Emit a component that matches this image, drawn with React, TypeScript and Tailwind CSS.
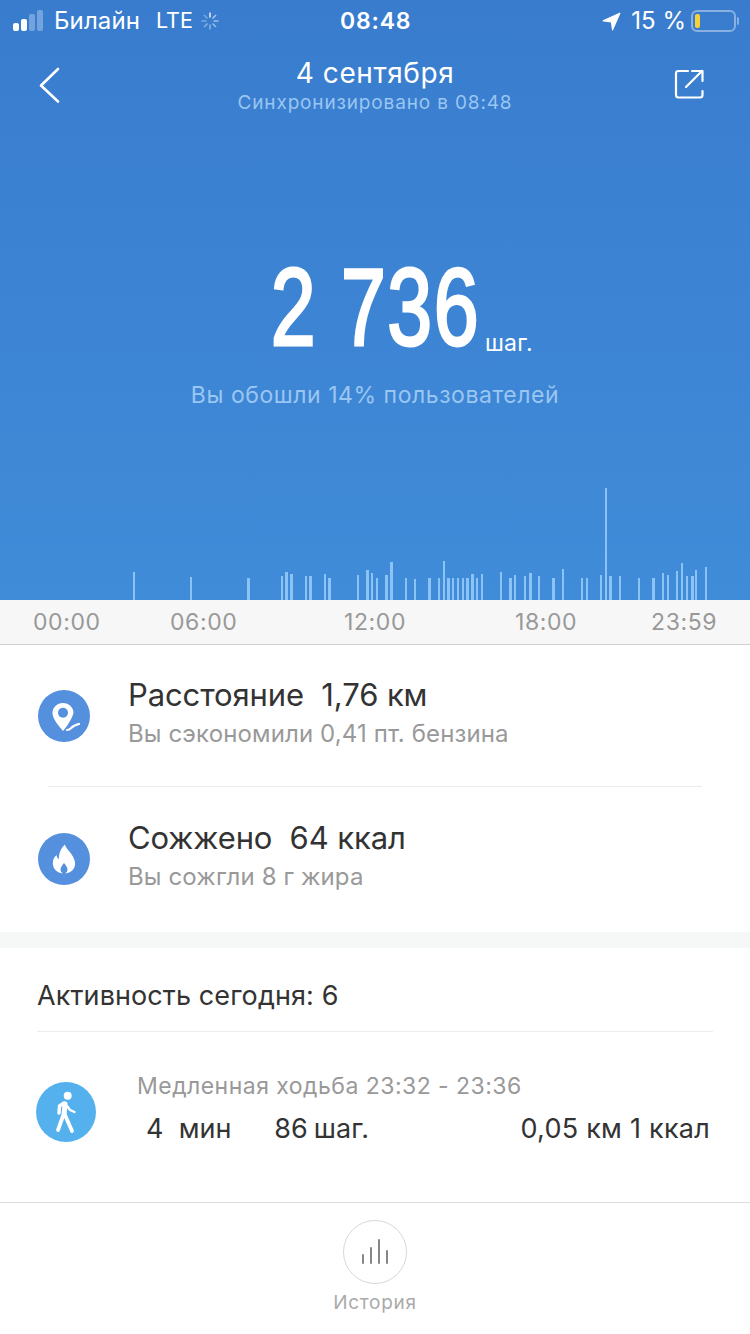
const bars: [number, number, number?][] = [
  [134, 28], [191, 23], [248, 22, 3], [282, 24], [286, 28, 3], [291, 26, 3], [306, 24], [310, 24, 3], [325, 26], [329, 22, 3],
  [358, 25], [367, 30, 3], [372, 27], [377, 22], [386, 25, 3], [391, 38, 3], [406, 22], [415, 21], [429, 22, 3], [439, 22],
  [444, 39], [448, 22, 3], [453, 22], [458, 22], [463, 22], [467, 22, 3], [472, 26, 3], [477, 22], [482, 26], [501, 28],
  [510, 22, 3], [515, 25], [525, 24], [530, 27, 3], [539, 24], [553, 22, 3], [563, 31], [582, 22], [587, 22], [601, 25],
  [606, 112], [610, 24, 3], [620, 24], [639, 22], [653, 22, 3], [663, 27], [668, 25], [677, 29], [682, 37], [687, 24],
  [692, 24, 3], [696, 30], [706, 33],
];

function Spinner() {
  const ticks = [0, 45, 90, 135, 180, 225, 270, 315];
  return (
    <svg width="20" height="20" viewBox="0 0 20 20" className="ml-[7px]">
      {ticks.map((a, i) => (
        <line key={a} x1="10" y1="1.5" x2="10" y2="6.5" stroke="#fff" strokeWidth="1.4" strokeOpacity={i === 0 ? 0.95 : 0.62 - i * 0.04} transform={`rotate(${a} 10 10)`} />
      ))}
    </svg>
  );
}

function StatusBar() {
  return (
    <div className="relative flex h-10 items-center text-white text-[25px] pt-[2px]">
      <div className="flex items-end gap-[2px] ml-[13px] h-[22px] pb-[1px]">
        <span className="w-[6px] h-[8px] rounded-[2px] bg-white" />
        <span className="w-[6px] h-[12px] rounded-[2px] bg-white" />
        <span className="w-[6px] h-[17px] rounded-[2px] bg-white/30" />
        <span className="w-[6px] h-[21px] rounded-[2px] bg-white/30" />
      </div>
      <span className="ml-[11px] text-[24px] tracking-[0.1px] leading-none">Билайн</span>
      <span className="ml-[16px] text-[21.5px] leading-none">LTE</span>
      <Spinner />
      <span className="absolute left-[340px] top-[7px] font-semibold text-[23px] tracking-[0.8px] leading-[28px]">08:48</span>
      <div className="ml-auto flex items-center">
        <svg width="19" height="19" viewBox="0 0 19 19">
          <path d="M17.8 1.2 L1.2 8.8 L9.4 10 L10.6 17.8 Z" fill="#fff" stroke="#fff" strokeWidth="1.2" strokeLinejoin="round" />
        </svg>
        <span className="ml-[10px] text-[24px] leading-none">15 %</span>
        <div className="ml-[5px] w-[45px] h-[22px] rounded-[6px] border-2 border-white/40 p-[2px]">
          <div className="w-[5px] h-[14px] rounded-[2px] bg-[#f7d038]" />
        </div>
        <span className="ml-[1px] mr-[11px] w-[2px] h-[8px] rounded-r-sm bg-white/40" />
      </div>
    </div>
  );
}

function NavBar() {
  return (
    <div className="flex h-[76px] items-start justify-between">
      <div className="w-[120px]">
        <svg width="24" height="38" viewBox="0 0 24 38" className="ml-[38px] mt-[27px]" fill="none">
          <path d="M20 2 L3 18.5 L20 34.5" stroke="#fff" strokeWidth="2.6" strokeLinecap="round" strokeLinejoin="round" />
        </svg>
      </div>
      <div className="flex flex-col items-center pt-[15px]">
        <span className="text-[28px] leading-[36px] text-white tracking-[0.6px]">4 сентября</span>
        <span className="text-[19px] leading-[24px] text-[#9ac6f2] tracking-[0.85px]">Синхронизировано в 08:48</span>
      </div>
      <div className="w-[120px] flex justify-end">
        <svg width="32" height="32" viewBox="0 0 32 32" className="mr-[44px] mt-[29px]" fill="none" stroke="#fff" strokeWidth="2.2" strokeLinecap="round" strokeLinejoin="round">
          <path d="M14 2 H4.5 Q2 2 2 4.5 V26 Q2 28.5 4.5 28.5 H26 Q28.5 28.5 28.5 26 V22" />
          <path d="M12 18 L28 2 M18 2 H28.5 V12" />
        </svg>
      </div>
    </div>
  );
}

function Chart() {
  return (
    <div className="relative h-[120px] w-full">
      {bars.map(([x, h, w]) => (
        <span key={x} className="absolute bottom-0 bg-[#8cc3f5]" style={{ left: x - 1, height: h, width: w ?? 2 }} />
      ))}
    </div>
  );
}

function StatRow({ icon, title, value, sub, top = false }: { icon: React.ReactNode; title: string; value: string; sub: string; top?: boolean }) {
  return (
    <div className={top ? "flex items-center h-[142px] pt-[4px]" : "flex items-center h-[142px]"}>
      <div className="ml-[38px] flex size-[52px] items-center justify-center rounded-full bg-[#5590de]">{icon}</div>
      <div className="ml-[38px] flex flex-col pb-[6px]">
        <div className="text-[31px] leading-[36px] text-[#333] tracking-[-0.1px] whitespace-pre">
          {title}  {value}
        </div>
        <div className="mt-[6px] text-[24px] leading-[30px] text-[#999] tracking-[0.13px]">{sub}</div>
      </div>
    </div>
  );
}

export default function App() {
  return (
    <div className="w-[750px] h-[1334px] overflow-hidden bg-white font-['Inter','Noto_Sans',sans-serif]">
      <div className="h-[600px] bg-gradient-to-b from-[#397cce] to-[#408cd9] flex flex-col">
        <StatusBar />
        <NavBar />
        <div className="mt-[127px] h-[128px] flex items-end justify-center pl-[56px]">
          <div className="w-[204px] shrink-0 flex justify-center">
            <span className="shrink-0 font-['Liberation_Sans',sans-serif] text-[109px] leading-[128px] text-white tracking-[2px] scale-x-[0.74] [-webkit-text-stroke:3px_white] whitespace-pre">
              2 736
            </span>
          </div>
          <span className="ml-[8px] w-[48px] shrink-0 mb-[15px] text-[23px] leading-[26px] text-white tracking-[0.2px] whitespace-pre">шаг.</span>
        </div>
        <div className="mt-[9px] text-center text-[23px] leading-[30px] text-[#9ac6f2] tracking-[0.55px]">Вы обошли 14% пользователей</div>
        <div className="mt-auto">
          <Chart />
        </div>
      </div>

      <div className="relative h-[45px] bg-[#f7f7f7] border-b border-[#cfcfcf] text-[23px] leading-[45px] text-[#999] tracking-[0.6px]">
        <span className="absolute left-[33px]">00:00</span>
        <span className="absolute left-[170px]">06:00</span>
        <span className="absolute left-[344px]">12:00</span>
        <span className="absolute left-[515px]">18:00</span>
        <span className="absolute left-[651px]">23:59</span>
      </div>

      <StatRow
        title="Расстояние"
        value="1,76 км"
        sub="Вы сэкономили 0,41 пт. бензина"
        icon={
          <svg width="34" height="34" viewBox="0 0 34 34">
            <path fill="#fff" d="M16 4 C10 4 5.5 8.5 5.5 14 C5.5 20 12 27 16 32 C19 28.5 24 22 26.5 14 C26.5 8.5 22 4 16 4 Z" />
            <circle cx="16" cy="13.7" r="5" fill="#5590de" />
            <path d="M20 31 C23 31 24 29 26 27.5 C28 26 29 26 32 25" stroke="#5590de" strokeWidth="6" fill="none" />
            <path d="M20 31 C23 31 24 29 26 27.5 C28 26 29 26 32 25" stroke="#fff" strokeWidth="2.2" fill="none" strokeLinecap="round" />
          </svg>
        }
      />
      <div className="mx-[48px] -mt-px h-px bg-[#ececec]" />
      <div className="-mt-[1px]" />
      <StatRow
        top
        title="Сожжено"
        value="64 ккал"
        sub="Вы сожгли 8 г жира"
        icon={
          <svg width="24" height="30" viewBox="0 0 24 30">
            <path fillRule="evenodd" fill="#fff" d="M13 0.5 C13.5 5 22 10 23 18.5 C23.8 25 18.5 29.5 12 29.5 C5.5 29.5 0.8 25 0.8 19 C0.8 15.5 2.5 12.5 4.5 11 C4.8 13 5.5 14.5 7 15 C6.5 9.5 9 4 13 0.5 Z M12 19 C10 21.5 8.5 23.5 8.5 25.5 C8.5 27.8 10 29.5 12 29.5 C14 29.5 15.5 27.8 15.5 25.5 C15.5 23.5 14 21.5 12 19 Z" />
          </svg>
        }
      />

      <div className="h-4 bg-[#f6f7f7] mt-[4px]" />

      <div className="mx-[37px] h-[84px] border-b border-[#ececec] text-[27px] leading-[96px] text-[#333] tracking-[0.1px]">Активность сегодня: 6</div>

      <div className="flex h-[171px] border-b border-[#dcdcdc] items-start">
        <div className="ml-[36px] mt-[50px] flex size-[60px] items-center justify-center rounded-full bg-[#55b1ee]">
          <svg width="32" height="46" viewBox="0 0 32 46" fill="none" stroke="#fff" strokeLinecap="round" strokeLinejoin="round">
            <circle cx="17.7" cy="6.7" r="4" fill="#fff" stroke="none" />
            <path d="M15 15 L14 26" strokeWidth="5" />
            <path d="M13 27 L8 41" strokeWidth="3.8" />
            <path d="M15 26 L22 42" strokeWidth="3.8" />
            <path d="M14 14 L9.5 17 L9 24" strokeWidth="3.4" />
            <path d="M17 17 L20 21 L24.5 23" strokeWidth="2.4" />
          </svg>
        </div>
        <div className="ml-[41px] flex-1 mr-[40px] pt-[39px]">
          <div className="text-[23px] leading-[30px] text-[#999] tracking-[0.47px]">Медленная ходьба 23:32 - 23:36</div>
          <div className="relative mt-[10px] h-[36px] text-[27px] leading-[36px] text-[#333] whitespace-pre">
            <span className="ml-[9px]">4  мин</span>
            <span className="ml-[43px]">86</span>
            <span className="ml-[6px]">шаг.</span>
            <span className="absolute right-0 tracking-[0.25px]">0,05 км 1 ккал</span>
          </div>
        </div>
      </div>

      <div className="flex flex-col items-center pt-[17px]">
        <div className="flex size-[64px] items-center justify-center rounded-full border border-[#d8d8d8]">
          <svg width="28" height="26" viewBox="0 0 28 26" stroke="#808080" strokeWidth="1.9" strokeLinecap="round">
            <path d="M2 16 V24 M10 9 V24 M18 1 V24 M26 12 V24" />
          </svg>
        </div>
        <span className="mt-[4px] text-[19px] leading-[30px] text-[#aaa] tracking-[0.7px]">История</span>
      </div>
    </div>
  );
}
